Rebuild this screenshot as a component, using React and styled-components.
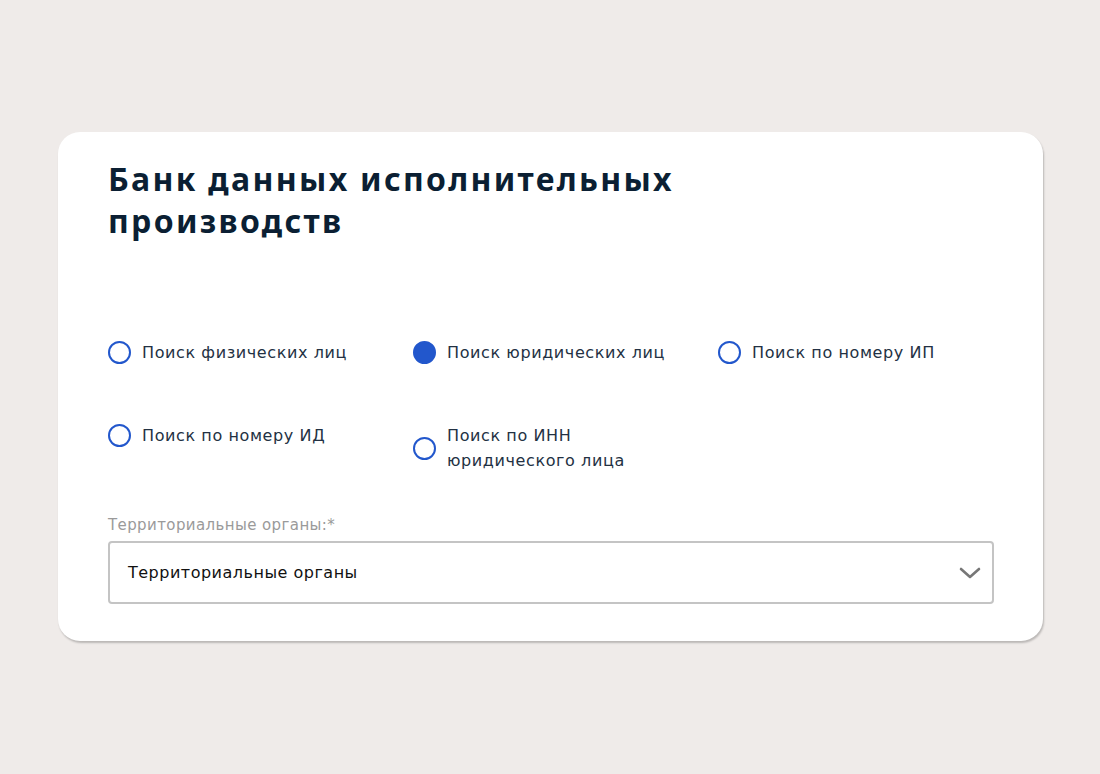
import React, { useState } from "react";
import styled, { createGlobalStyle } from "styled-components";

const Global = createGlobalStyle`
  html, body {
    margin: 0;
    padding: 0;
    background: #efebe9;
    font-family: "DejaVu Sans", "Noto Sans", sans-serif;
  }
`;

const Page = styled.div`
  box-sizing: border-box;
  width: 1100px;
  height: 774px;
  padding: 132px 57px 0 58px;
`;

const Card = styled.div`
  box-sizing: border-box;
  width: 985px;
  height: 509px;
  background: #fff;
  border-radius: 22px;
  box-shadow: 1px 2px 2px rgba(0, 0, 0, 0.22);
  padding: 26px 49px 0 50px;
`;

const Title = styled.h1`
  margin: 0;
  max-width: 620px;
  font-family: "Noto Sans", sans-serif;
  font-size: 32px;
  line-height: 42px;
  font-weight: 700;
  color: #0b1f33;
  letter-spacing: 2.3px;
`;

const Options = styled.div`
  display: grid;
  grid-template-columns: 305px 305px 305px;
  align-items: start;
  row-gap: 58px;
  margin-top: 98px;
`;

const Option = styled.label`
  display: flex;
  align-items: center;
  gap: 11px;
  cursor: pointer;
  font-size: 16px;
  line-height: 25px;
  letter-spacing: 0.6px;
  color: #233143;
`;

const Circle = styled.span`
  box-sizing: border-box;
  flex: none;
  width: 23px;
  height: 23px;
  border-radius: 50%;
  border: 2px solid #2257cc;
  background: ${(p) => (p.$checked ? "#2257cc" : "#fff")};
`;

const Field = styled.div`
  margin-top: 43px;
`;

const Label = styled.div`
  font-size: 15px;
  line-height: 18px;
  letter-spacing: 0.4px;
  color: #9a9a9a;
  margin-bottom: 7px;
`;

const Select = styled.div`
  box-sizing: border-box;
  display: flex;
  align-items: center;
  justify-content: space-between;
  height: 63px;
  border: 2px solid #c4c4c4;
  border-radius: 4px;
  padding: 0 11px 0 18px;
  font-size: 16px;
  letter-spacing: 0.5px;
  color: #111;
`;

const Chevron = () => (
  <svg width="22" height="22" viewBox="0 0 22 22" fill="none">
    <path d="M2 7l9 8 9-8" stroke="#777" strokeWidth="2.6" strokeLinecap="round" strokeLinejoin="round" />
  </svg>
);

const items = [
  "Поиск физических лиц",
  "Поиск юридических лиц",
  "Поиск по номеру ИП",
  "Поиск по номеру ИД",
  "Поиск по ИНН\nюридического лица",
];

export default function App() {
  const [sel, setSel] = useState(1);
  return (
    <Page>
      <Global />
      <Card>
        <Title>Банк данных исполнительных производств</Title>
        <Options>
          {items.map((t, i) => (
            <Option key={i} onClick={() => setSel(i)}>
              <Circle $checked={sel === i} />
              <span style={{ whiteSpace: "pre-line" }}>{t}</span>
            </Option>
          ))}
        </Options>
        <Field>
          <Label>Территориальные органы:*</Label>
          <Select>
            Территориальные органы
            <Chevron />
          </Select>
        </Field>
      </Card>
    </Page>
  );
}
